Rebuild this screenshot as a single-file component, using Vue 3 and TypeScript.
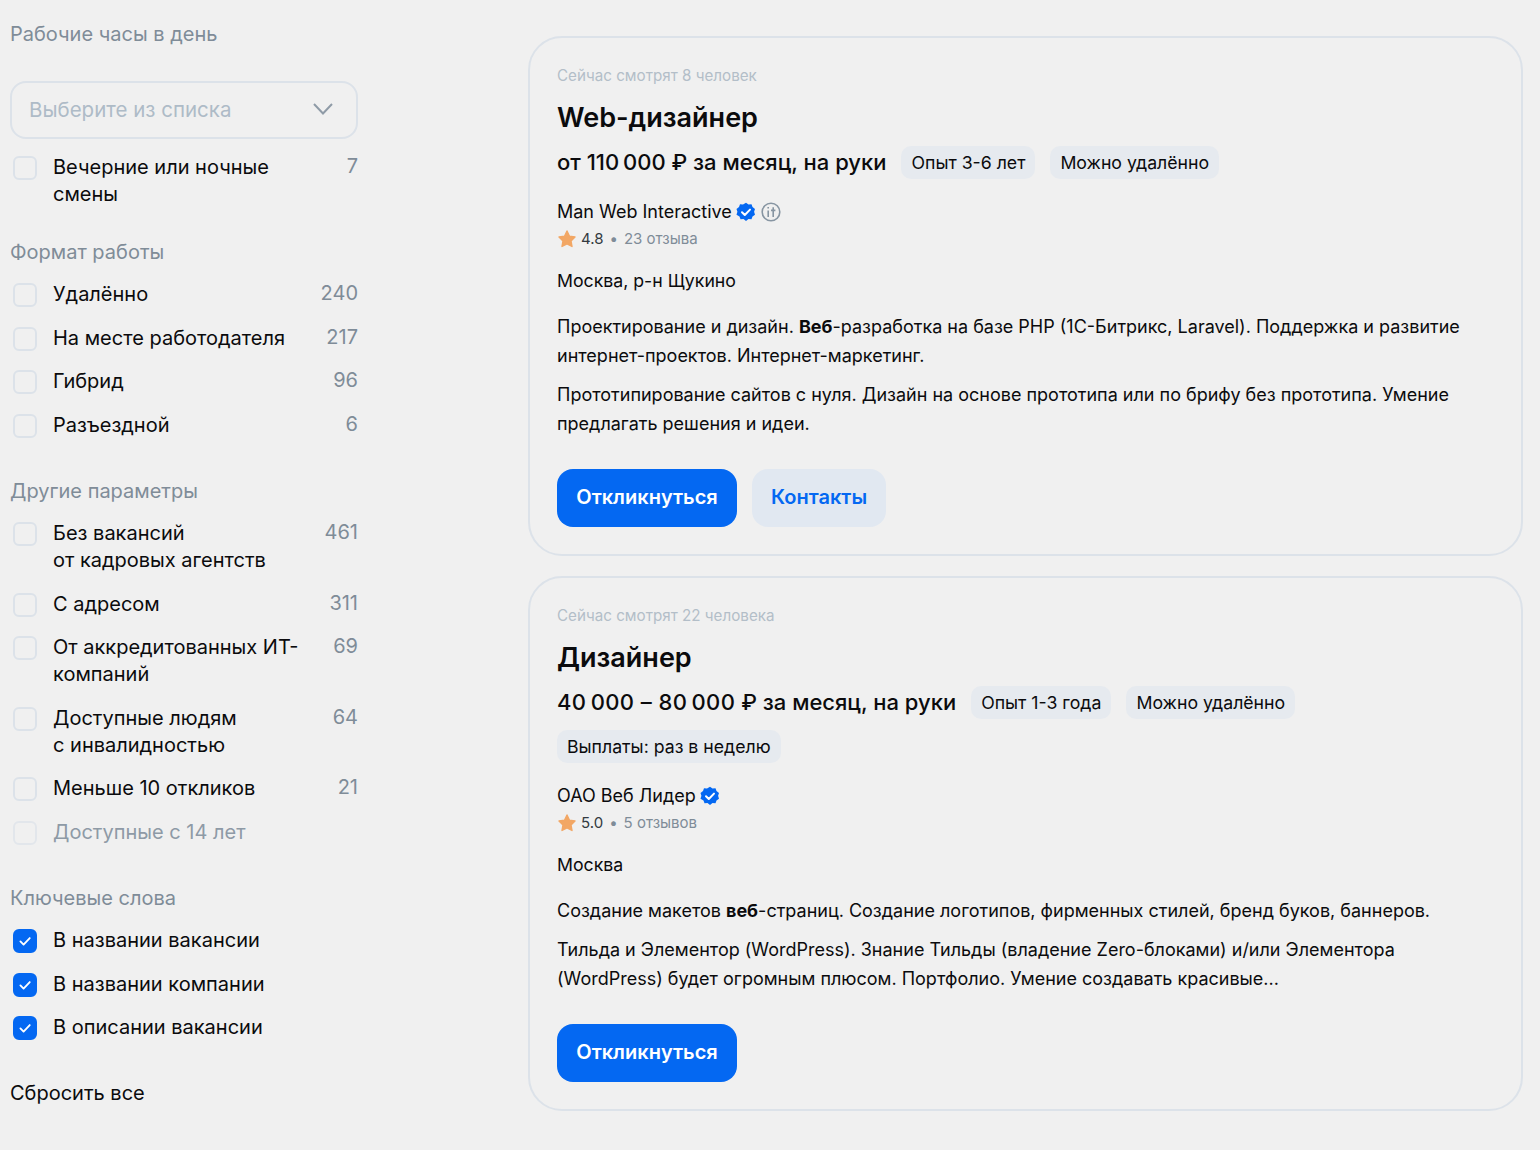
<template>
  <div class="page">
    <aside class="filters">
      <section v-for="group in groups" :key="group.title" :class="['group', group.mod]">
        <h3 class="filter-title">{{ group.title }}</h3>
        <button v-if="group.select" type="button" class="select">
          <span>Выберите из списка</span>
          <svg viewBox="0 0 24 24" class="chevron" aria-hidden="true"><path d="M3 7l9 9.5L21 7" /></svg>
        </button>
        <div class="rows">
          <label v-for="row in group.rows" :key="row.label" :class="['row', { 'row--disabled': row.disabled }]">
            <span :class="['box', { 'box--checked': row.checked }]">
              <svg v-if="row.checked" viewBox="0 0 24 24" class="tick" aria-hidden="true"><path d="M6.5 12.5l3.8 3.8 7.4-7.8" /></svg>
            </span>
            <span class="row-label">{{ row.label }}</span>
            <span v-if="row.count" class="row-count">{{ row.count }}</span>
          </label>
        </div>
      </section>

      <a class="reset">Сбросить все</a>
    </aside>

    <main class="cards">
      <article class="card card--first">
        <p class="viewers">Сейчас смотрят 8 человек</p>
        <h2 class="job-title">Web-дизайнер</h2>
        <div class="meta">
          <span class="salary">от 110&#8201;000 ₽ за месяц, на руки</span>
          <span class="tag">Опыт 3-6 лет</span>
          <span class="tag">Можно удалённо</span>
        </div>
        <div class="company">
          <span>Man Web Interactive</span>
          <svg class="badge" viewBox="0 0 20 20" aria-hidden="true">
            <path class="badge-fill" d="M10 .8l2.5 1.7 3-.2 1 2.8 2.5 1.8-.9 2.9.9 2.9-2.5 1.8-1 2.8-3-.2-2.5 1.8-2.5-1.8-3 .2-1-2.8L.5 12.7l.9-2.9-.9-2.9L3 5.1l1-2.8 3 .2z" />
            <path class="badge-check" d="M6 10.2l2.8 2.8L14 7.6" />
          </svg>
          <svg class="it-badge" viewBox="0 0 20 20" aria-hidden="true">
            <circle cx="10" cy="10" r="8.8" />
            <path d="M7.2 8.4V15M7.2 5v1.4M12.2 5.2V15M10 8.4h4.4" />
          </svg>
        </div>
        <div class="rating">
          <svg class="star" viewBox="0 0 20 20" aria-hidden="true"><path d="M10 2l2.5 5.2 5.5.8-4 3.9 1 5.6-5-2.7-5 2.7 1-5.6-4-3.9 5.5-.8z" /></svg>
          <span class="score">4.8</span><span class="dot">•</span><span class="reviews">23 отзыва</span>
        </div>
        <p class="location">Москва, р-н Щукино</p>
        <p class="text text--a">Проектирование и дизайн. <b>Веб</b>-разработка на базе PHP (1С-Битрикс, Laravel). Поддержка и развитие интернет-проектов. Интернет-маркетинг.</p>
        <p class="text text--b">Прототипирование сайтов с нуля. Дизайн на основе прототипа или по брифу без прототипа. Умение предлагать решения и идеи.</p>
        <div class="actions">
          <button type="button" class="btn btn--primary">Откликнуться</button>
          <button type="button" class="btn btn--soft">Контакты</button>
        </div>
      </article>

      <article class="card">
        <p class="viewers">Сейчас смотрят 22 человека</p>
        <h2 class="job-title">Дизайнер</h2>
        <div class="meta">
          <span class="salary"><span class="range">40&#8201;000 – 80&#8201;000</span> ₽ за месяц, на руки</span>
          <span class="tag">Опыт 1-3 года</span>
          <span class="tag">Можно удалённо</span>
          <span class="tag">Выплаты: раз в неделю</span>
        </div>
        <div class="company">
          <span>ОАО Веб Лидер</span>
          <svg class="badge" viewBox="0 0 20 20" aria-hidden="true">
            <path class="badge-fill" d="M10 .8l2.5 1.7 3-.2 1 2.8 2.5 1.8-.9 2.9.9 2.9-2.5 1.8-1 2.8-3-.2-2.5 1.8-2.5-1.8-3 .2-1-2.8L.5 12.7l.9-2.9-.9-2.9L3 5.1l1-2.8 3 .2z" />
            <path class="badge-check" d="M6 10.2l2.8 2.8L14 7.6" />
          </svg>
        </div>
        <div class="rating">
          <svg class="star" viewBox="0 0 20 20" aria-hidden="true"><path d="M10 2l2.5 5.2 5.5.8-4 3.9 1 5.6-5-2.7-5 2.7 1-5.6-4-3.9 5.5-.8z" /></svg>
          <span class="score">5.0</span><span class="dot">•</span><span class="reviews">5 отзывов</span>
        </div>
        <p class="location">Москва</p>
        <p class="text text--a">Создание макетов <b>веб</b>-страниц. Создание логотипов, фирменных стилей, бренд буков, баннеров.</p>
        <p class="text text--b">Тильда и Элементор (WordPress). Знание Тильды (владение Zero-блоками) и/или Элементора (WordPress) будет огромным плюсом. Портфолио. Умение создавать красивые...</p>
        <div class="actions">
          <button type="button" class="btn btn--primary">Откликнуться</button>
        </div>
      </article>
    </main>
  </div>
</template>

<script setup lang="ts">
interface Row {
  label: string
  count?: number
  checked?: boolean
  disabled?: boolean
}

interface Group {
  title: string
  mod: string
  select?: boolean
  rows: Row[]
}

const groups: Group[] = [
  {
    title: 'Рабочие часы в день',
    mod: 'group--first',
    select: true,
    rows: [{ label: 'Вечерние или ночные смены', count: 7 }]
  },
  {
    title: 'Формат работы',
    mod: 'group--tight',
    rows: [
      { label: 'Удалённо', count: 240 },
      { label: 'На месте работодателя', count: 217 },
      { label: 'Гибрид', count: 96 },
      { label: 'Разъездной', count: 6 }
    ]
  },
  {
    title: 'Другие параметры',
    mod: '',
    rows: [
      { label: 'Без вакансий\nот кадровых агентств', count: 461 },
      { label: 'С адресом', count: 311 },
      { label: 'От аккредитованных ИТ-компаний', count: 69 },
      { label: 'Доступные людям\nс инвалидностью', count: 64 },
      { label: 'Меньше 10 откликов', count: 21 },
      { label: 'Доступные с 14 лет', disabled: true }
    ]
  },
  {
    title: 'Ключевые слова',
    mod: '',
    rows: [
      { label: 'В названии вакансии', checked: true },
      { label: 'В названии компании', checked: true },
      { label: 'В описании вакансии', checked: true }
    ]
  }
]
</script>

<style>
body {
  background: #f0f0f0;
}
</style>

<style scoped>
.page {
  display: grid;
  grid-template-columns: 348px 995px;
  column-gap: 170px;
  min-height: 1150px;
  padding: 21px 0 0 10px;
  box-sizing: border-box;
  font-family: Inter, "Noto Sans", sans-serif;
  color: #0b0b0d;
}

.filter-title {
  margin: 0;
  color: #7f8c98;
  font-size: 20px;
  font-weight: 400;
  line-height: 27px;
}

.select {
  display: flex;
  align-items: center;
  justify-content: space-between;
  width: 100%;
  height: 58px;
  margin-top: 33px;
  padding: 0 21px 2px 17px;
  border: 2px solid #dce2e9;
  border-radius: 16px;
  background: transparent;
  color: #aebbc7;
  font: 400 20.5px/27px Inter, sans-serif;
}

.chevron {
  width: 24px;
  height: 24px;
  fill: none;
  stroke: #8f9ba7;
  stroke-width: 2;
}

.rows {
  display: grid;
  gap: 16.5px;
  margin-top: 15px;
}

.group {
  margin-top: 39.5px;
}

.group--first {
  margin-top: 0;
}

.group--tight {
  margin-top: 31px;
}

.row {
  display: grid;
  grid-template-columns: 24px minmax(0, 1fr) auto;
  column-gap: 16px;
  align-items: start;
  padding-left: 3px;
  font-size: 20px;
  line-height: 27px;
}

.row-label {
  padding-right: 14px;
  white-space: pre-line;
}

.row-count {
  color: #7f8c98;
  line-height: 25px;
}

.box {
  display: grid;
  place-items: center;
  width: 24px;
  height: 24px;
  margin-top: 2px;
  border: 2px solid #dce2e9;
  border-radius: 6px;
  box-sizing: border-box;
}

.box--checked {
  border-color: #0468f2;
  background: #0468f2;
}

.tick {
  width: 20px;
  height: 20px;
  fill: none;
  stroke: #fff;
  stroke-width: 2.2;
  stroke-linecap: round;
  stroke-linejoin: round;
}

.row--disabled {
  color: #8e9aa6;
}

.row--disabled .box {
  border-color: #e2e6eb;
}

.reset {
  display: block;
  margin-top: 39px;
  font-size: 20px;
  line-height: 27px;
}

.cards {
  display: grid;
  align-content: start;
  gap: 20px;
  margin-top: 15px;
}

.card {
  padding: 28px 27px 27px;
  border: 2px solid #dce2e9;
  border-radius: 34px;
}

.card p {
  margin: 0;
}

.card .viewers {
  color: #b3bec8;
  font-size: 15.2px;
  line-height: 20px;
}

.job-title {
  margin: 14px 0 0;
  font-size: 27px;
  font-weight: 600;
  line-height: 36px;
}

.meta {
  display: flex;
  flex-wrap: wrap;
  align-items: center;
  gap: 11px 15px;
  margin-top: 10px;
}

.salary {
  font-size: 22px;
  font-weight: 500;
  line-height: 33px;
}

.range {
  letter-spacing: .4px;
}

.tag {
  height: 33px;
  padding: 0 10px;
  border-radius: 10px;
  background: #e6eaef;
  font-size: 17.7px;
  line-height: 33px;
}

.company {
  display: flex;
  align-items: center;
  gap: 4px;
  margin-top: 19px;
  font-size: 18px;
  line-height: 27px;
}

.badge {
  width: 20px;
  height: 20px;
}

.badge-fill {
  fill: #0468f2;
}

.badge-check {
  fill: none;
  stroke: #fff;
  stroke-width: 2;
  stroke-linecap: round;
  stroke-linejoin: round;
}

.it-badge {
  width: 20px;
  height: 20px;
  margin-left: 1px;
  fill: none;
  stroke: #8795a2;
  stroke-width: 1.6;
}

.rating {
  display: flex;
  align-items: center;
  margin-top: 2px;
  font-size: 15px;
  line-height: 24px;
}

.star {
  width: 20px;
  height: 20px;
  margin-right: 4px;
  fill: #f2a765;
  stroke: #f2a765;
  stroke-width: 1.4;
  stroke-linejoin: round;
}

.score {
  color: #333a40;
}

.dot {
  margin: 0 6px;
  color: #7f8c98;
}

.reviews {
  color: #7f8c98;
}

.card .location {
  margin-top: 16px;
  font-size: 17.7px;
  line-height: 27px;
}

.card .text {
  font-size: 18px;
  line-height: 29px;
}

.card .text--a {
  margin-top: 18px;
}

.card .text--b {
  margin-top: 10px;
}

.text b {
  font-weight: 700;
}

.actions {
  display: flex;
  gap: 15px;
  margin-top: 31px;
}

.btn {
  height: 58px;
  padding: 0 19px 2px;
  border: 0;
  border-radius: 16px;
  font: 600 20px/27px Inter, sans-serif;
}

.btn--primary {
  width: 180px;
  background: #0468f2;
  color: #fff;
}

.btn--soft {
  background: #e1e8f1;
  color: #0468f2;
}
</style>
